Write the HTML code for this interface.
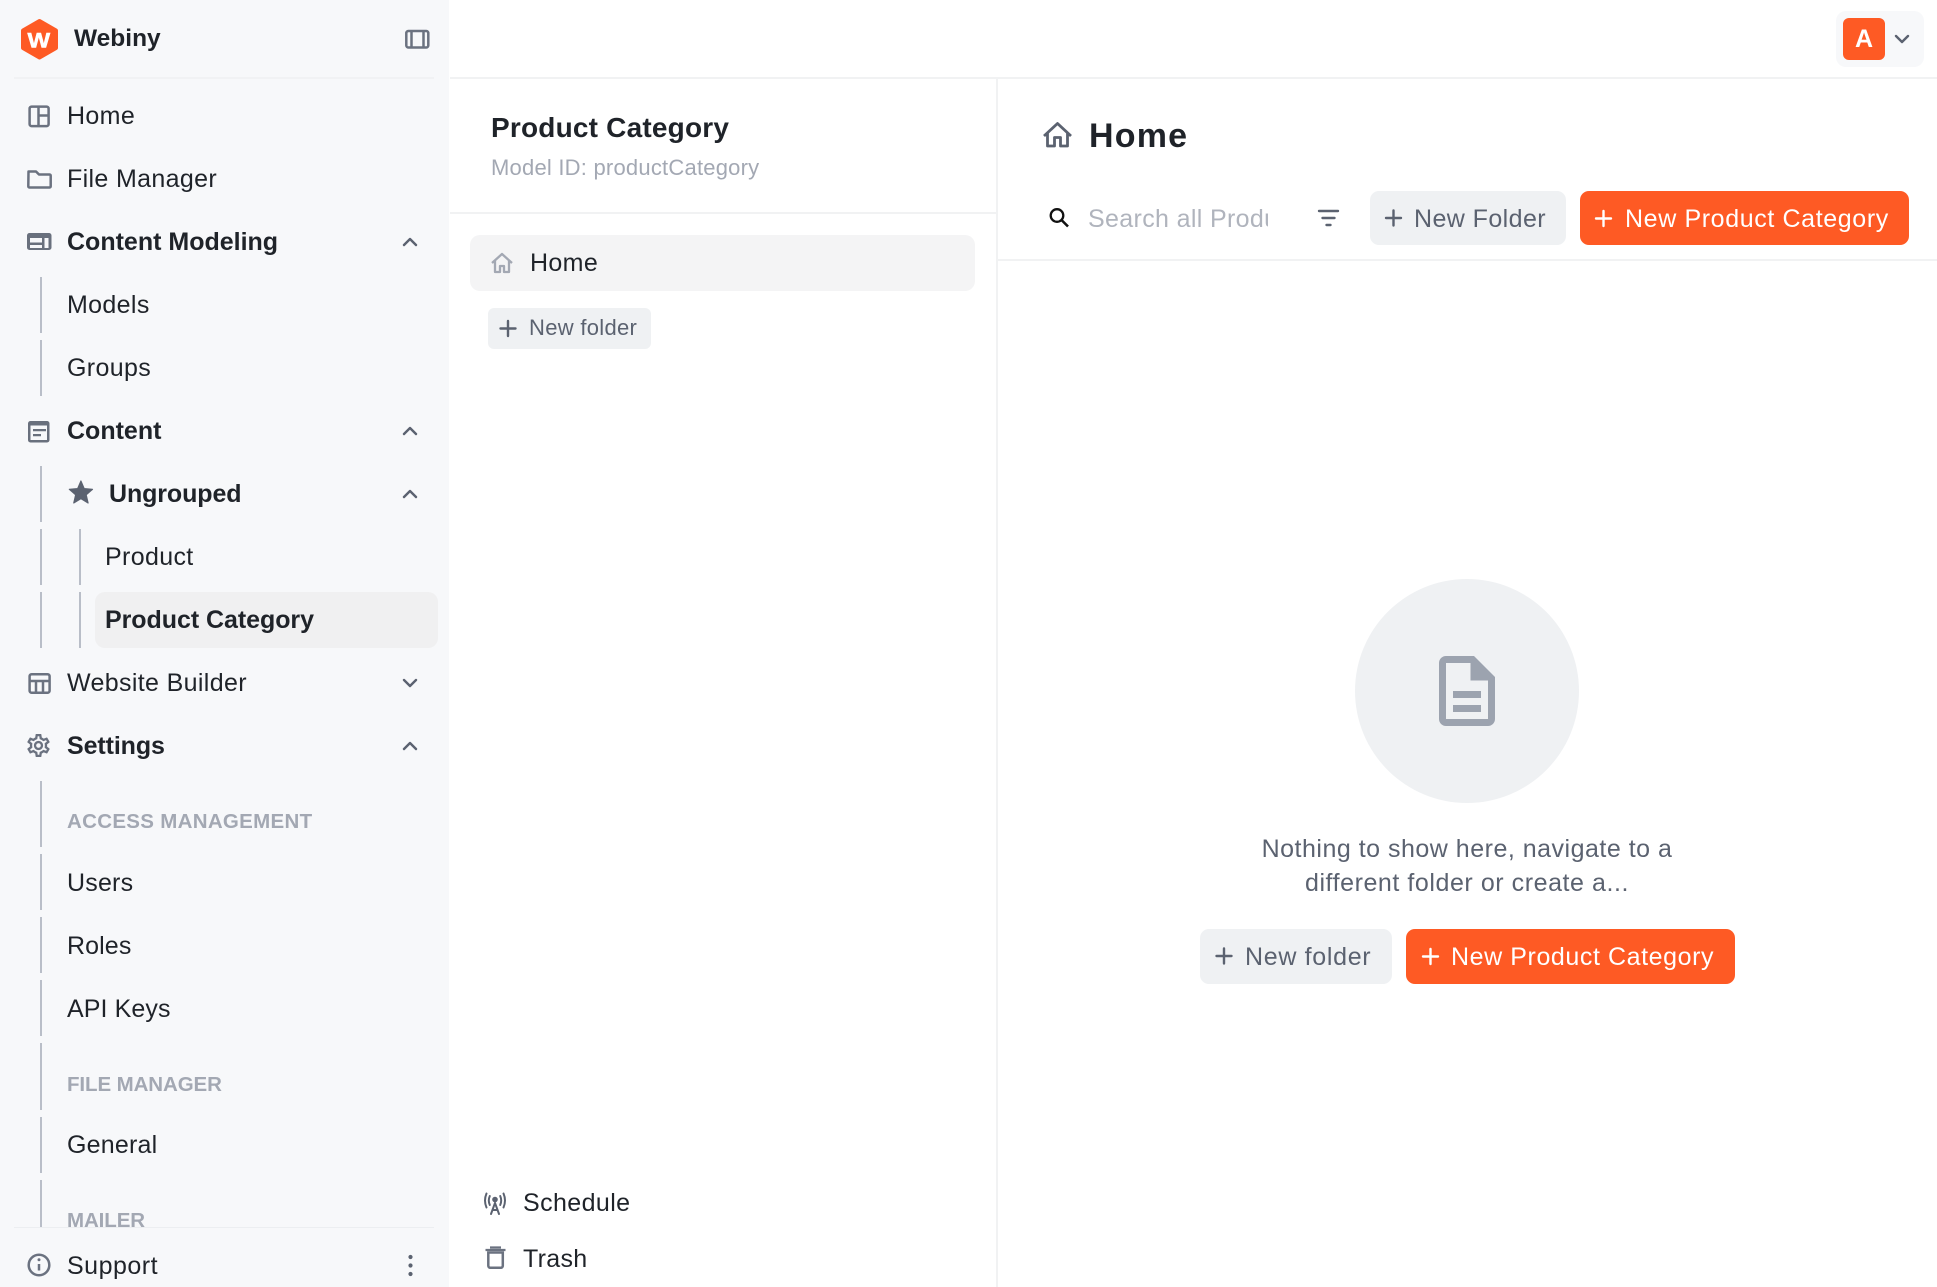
<!DOCTYPE html>
<html lang="en"><head><meta charset="utf-8"><title>Product Category</title>
<style>
html,body{margin:0;padding:0;width:1937px;height:1287px;overflow:hidden;background:#fff;font-family:"Liberation Sans",sans-serif}
.a{position:absolute}
.t{position:absolute;white-space:nowrap;line-height:40px;font-size:25px;letter-spacing:.35px;color:#1f2329;margin-top:1px}
.b{font-weight:700;letter-spacing:0}
.h{font-size:20.5px;font-weight:700;letter-spacing:.3px;color:#a3a8b3}
.v{position:absolute;width:2px;background:#b9bec8}
.g{color:#5b6270}
.w{color:#fff}
</style></head><body>
<div class="a" style="left:0;top:0;width:449px;height:1287px;background:#f7f8fa"></div>
<div class="a" style="left:14px;top:77px;width:420px;height:2px;background:#f1f2f4"></div>
<div class="a" style="left:450px;top:77px;width:1487px;height:2px;background:#f1f2f3"></div>
<div class="a" style="left:996px;top:79px;width:2px;height:1208px;background:#f1f2f3"></div>
<div class="a" style="left:450px;top:212px;width:546px;height:2px;background:#f1f2f3"></div>
<div class="a" style="left:998px;top:259px;width:939px;height:2px;background:#f1f2f3"></div>

<div class="t b" style="left:74px;top:18px;font-size:24.5px">Webiny</div>

<div class="a" style="left:95px;top:592px;width:343px;height:56px;background:#f0f0f1;border-radius:10px"></div>
<div class="a" style="left:0;top:0;width:449px;height:1227px;overflow:hidden">
<div class="v" style="left:40px;top:277px;height:56px"></div>
<div class="v" style="left:40px;top:340px;height:56px"></div>
<div class="v" style="left:40px;top:466px;height:56px"></div>
<div class="v" style="left:40px;top:529px;height:56px"></div>
<div class="v" style="left:40px;top:592px;height:56px"></div>
<div class="v" style="left:79px;top:529px;height:56px"></div>
<div class="v" style="left:79px;top:592px;height:56px"></div>
<div class="v" style="left:40px;top:781px;height:66px"></div>
<div class="v" style="left:40px;top:854px;height:56px"></div>
<div class="v" style="left:40px;top:917px;height:56px"></div>
<div class="v" style="left:40px;top:980px;height:56px"></div>
<div class="v" style="left:40px;top:1043px;height:67px"></div>
<div class="v" style="left:40px;top:1117px;height:56px"></div>
<div class="v" style="left:40px;top:1180px;height:60px"></div>
<div class="t" style="left:67px;top:95px">Home</div>
<div class="t" style="left:67px;top:158px">File Manager</div>
<div class="t b" style="left:67px;top:221px">Content Modeling</div>
<div class="t" style="left:67px;top:284px">Models</div>
<div class="t" style="left:67px;top:347px">Groups</div>
<div class="t b" style="left:67px;top:410px">Content</div>
<div class="t b" style="left:109px;top:473px;letter-spacing:-.1px">Ungrouped</div>
<div class="t" style="left:105px;top:536px">Product</div>
<div class="t b" style="left:105px;top:599px;letter-spacing:-.05px">Product Category</div>
<div class="t" style="left:67px;top:662px">Website Builder</div>
<div class="t b" style="left:67px;top:725px;letter-spacing:-.1px">Settings</div>
<div class="t h" style="left:67px;top:801px">ACCESS MANAGEMENT</div>
<div class="t" style="left:67px;top:862px;letter-spacing:.2px">Users</div>
<div class="t" style="left:67px;top:925px;letter-spacing:.1px">Roles</div>
<div class="t" style="left:67px;top:988px;letter-spacing:.1px">API Keys</div>
<div class="t h" style="left:67px;top:1064px;letter-spacing:-.1px">FILE MANAGER</div>
<div class="t" style="left:67px;top:1124px;letter-spacing:.2px">General</div>
<div class="t h" style="left:67px;top:1200px;letter-spacing:-.1px">MAILER</div>
</div>
<div class="a" style="left:14px;top:1227px;width:420px;height:1px;background:#eceef1"></div>
<div class="t" style="left:67px;top:1245px;letter-spacing:.5px">Support</div>

<div class="t b" style="left:491px;top:108px;font-size:28px;letter-spacing:.2px;margin-top:0">Product Category</div>
<div class="t" style="left:491px;top:147px;font-size:22px;letter-spacing:.22px;color:#a3a8b3">Model ID: productCategory</div>
<div class="a" style="left:470px;top:235px;width:505px;height:56px;background:#f4f4f5;border-radius:10px"></div>
<div class="t" style="left:530px;top:242px">Home</div>
<div class="a" style="left:488px;top:308px;width:163px;height:41px;background:#eff1f3;border-radius:6px"></div>
<div class="t g" style="left:529px;top:307px;font-size:22px;letter-spacing:.3px">New folder</div>
<div class="t" style="left:523px;top:1182px;letter-spacing:.4px">Schedule</div>
<div class="t" style="left:523px;top:1238px;letter-spacing:.3px">Trash</div>

<div class="a" style="left:1836px;top:11px;width:88px;height:56px;background:#f7f8fa;border-radius:10px"></div>
<div class="a" style="left:1843px;top:18px;width:42px;height:42px;background:#fe5a24;border-radius:6px"></div>
<div class="t b w" style="left:1843px;top:18px;width:42px;text-align:center">A</div>

<div class="t b" style="left:1089px;top:116px;font-size:34px;letter-spacing:1.2px;margin-top:0">Home</div>
<div class="t" style="left:1088px;top:198px;width:180px;overflow:hidden;color:#b0b4bd;letter-spacing:.35px">Search all Products</div>
<div class="a" style="left:1370px;top:191px;width:196px;height:54px;background:#eff1f3;border-radius:9px"></div>
<div class="t g" style="left:1414px;top:198px;letter-spacing:.42px">New Folder</div>
<div class="a" style="left:1580px;top:191px;width:329px;height:54px;background:#fe5a24;border-radius:9px"></div>
<div class="t w" style="left:1625px;top:198px;letter-spacing:.62px">New Product Category</div>

<div class="a" style="left:1355px;top:579px;width:224px;height:224px;background:#eff1f3;border-radius:50%"></div>
<div class="t g" style="left:1067px;width:800px;text-align:center;top:828px;letter-spacing:.5px">Nothing to show here, navigate to a</div>
<div class="t g" style="left:1067px;width:800px;text-align:center;top:862px;letter-spacing:.56px">different folder or create a...</div>
<div class="a" style="left:1200px;top:929px;width:192px;height:55px;background:#eff1f3;border-radius:9px"></div>
<div class="t g" style="left:1245px;top:936px;letter-spacing:.68px">New folder</div>
<div class="a" style="left:1406px;top:929px;width:329px;height:55px;background:#fe5a24;border-radius:9px"></div>
<div class="t w" style="left:1451px;top:936px;letter-spacing:.58px">New Product Category</div>

<svg class="a" style="left:0;top:0" width="1937" height="1287" viewBox="0 0 1937 1287" fill="none">
<polygon points="39.5,21 56,30.5 56,48 39.500,57.500 23,48 23,30.500" fill="#fe5a24" stroke="#fe5a24" stroke-width="4" stroke-linejoin="round"/>
<text x="0" y="0" transform="translate(27.5 47.500) scale(1.2 1.05)" font-family="Liberation Sans" font-weight="700" font-size="20" fill="#fff" stroke="#fff" stroke-width=".5">W</text>
<g stroke="#6b7280" stroke-width="2.5">
<rect x="406.3" y="31" width="22" height="16.5" rx="2"/><path d="M411.5 31v16.500M423.500 31v16.500"/>
<rect x="29.600" y="106.600" width="19" height="19.500" rx="2"/><path d="M38.500 106.600v19.500M38.500 115.500h10"/>
<path d="M28.500 171.500h7.500l3 3h10.500a1.300 1.300 0 0 1 1.200 1.300v10.500a1.300 1.300 0 0 1-1.200 1.200H29.500a1.300 1.300 0 0 1-1.200-1.200z" stroke-linejoin="round"/>
<rect x="29.600" y="674.200" width="20" height="18.500" rx="2"/><path d="M29.600 681h20M36 681v11.700M43 681v11.700"/>
<circle cx="39" cy="1265" r="10.300"/>
<path d="M39 1264v6.500" />
</g>
<rect x="27" y="233" width="24.500" height="17" rx="2.500" fill="#69707d"/>
<path d="M30 238h12v4.500H30zM30 245h12v3H30zM44.500 238h4v10h-4z" fill="#f7f8fa"/>
<rect x="28" y="421" width="21.500" height="21.500" rx="2.500" fill="#69707d"/>
<path d="M30.500 425.500h16.500v14.500H30.500z" fill="#f7f8fa"/>
<path d="M33 429h13v2.300H33zM33 434h8v2.300H33z" fill="#69707d"/>
<path d="M488.300 1252.500h14.500v13.300a2 2 0 0 1-2 2h-10.500a2 2 0 0 1-2-2z" stroke="#6b7280" stroke-width="2.500"/><path d="M485.500 1250h20M490 1247.500h11" stroke="#6b7280" stroke-width="2.300"/>
<circle cx="39" cy="1259.800" r="1.500" fill="#6b7280"/>
<path fill="#6b7280" transform="translate(24.700 731.700) scale(1.150)" d="M19.43 12.98c.04-.32.07-.64.07-.98 0-.34-.03-.66-.07-.98l2.11-1.65c.19-.15.24-.42.12-.64l-2-3.46c-.09-.16-.26-.25-.44-.25-.06 0-.12.01-.17.03l-2.49 1c-.52-.4-1.08-.73-1.69-.98l-.38-2.65C14.46 2.18 14.25 2 14 2h-4c-.25 0-.46.18-.49.42l-.38 2.65c-.61.25-1.17.59-1.69.98l-2.49-1c-.06-.02-.12-.03-.18-.03-.17 0-.34.09-.43.25l-2 3.46c-.13.22-.07.49.12.64l2.11 1.65c-.04.32-.07.65-.07.98 0 .33.03.66.07.98l-2.11 1.65c-.19.15-.24.42-.12.64l2 3.46c.09.16.26.25.44.25.06 0 .12-.01.17-.03l2.49-1c.52.4 1.08.73 1.69.98l.38 2.65c.03.24.24.42.49.42h4c.25 0 .46-.18.49-.42l.38-2.65c.61-.25 1.17-.59 1.69-.98l2.49 1c.06.02.12.03.18.03.17 0 .34-.09.43-.25l2-3.46c.12-.22.07-.49-.12-.64l-2.11-1.65zm-1.98-1.71c.04.31.05.52.05.73 0 .21-.02.43-.05.73l-.14 1.13.89.7 1.08.84-.7 1.21-1.27-.51-1.04-.42-.9.68c-.43.32-.84.56-1.25.73l-1.06.43-.16 1.13-.2 1.35h-1.4l-.19-1.35-.16-1.13-1.06-.43c-.43-.18-.83-.41-1.23-.71l-.91-.7-1.06.43-1.27.51-.7-1.21 1.08-.84.89-.7-.14-1.13c-.03-.31-.05-.54-.05-.74s.02-.43.05-.73l.14-1.13-.89-.7-1.08-.84.7-1.21 1.27.51 1.04.42.9-.68c.43-.32.84-.56 1.25-.73l1.06-.43.16-1.13.2-1.35h1.39l.19 1.35.16 1.13 1.06.43c.43.18.83.41 1.23.71l.91.7 1.06-.43 1.27-.51.7 1.21-1.07.85-.89.7.14 1.13zM12 8c-2.21 0-4 1.790-4 4s1.790 4 4 4 4-1.790 4-4-1.790-4-4-4zm0 6c-1.100 0-2-.9-2-2s.9-2 2-2 2 .9 2 2-.9 2-2 2z"/>
<path fill="#5b6270" transform="translate(67 478.600) scale(1.160)" d="M12 17.270L18.180 21l-1.640-7.030L22 9.240l-7.190-.61L12 2 9.190 8.630 2 9.240l5.460 4.730L5.820 21z" stroke="#5b6270" stroke-width="1" stroke-linejoin="round"/>
<g stroke="#5b6270" stroke-width="2.400" stroke-linecap="round" stroke-linejoin="round">
<path d="M404 245l6-6 6 6M404 434l6-6 6 6M404 497l6-6 6 6M404 749l6-6 6 6M404 680l6 6 6-6M1896 36l6 6 6-6"/>
<path d="M1319 211h19M1322.500 218h12M1326.500 225h4"/>
<path d="M1386 218h15M1393.500 210.500v15M1216.500 956h15M1224 948.500v15M500.500 328.500h15M508 321v15"/>
</g>
<g stroke="#fff" stroke-width="2.400" stroke-linecap="round"><path d="M1596 218.500h15M1603.500 211v15M1423 956.500h15M1430.500 949v15"/></g>
<g fill="#5b6270"><circle cx="410.500" cy="1257" r="2.100"/><circle cx="410.500" cy="1265.500" r="2.100"/><circle cx="410.500" cy="1274" r="2.100"/></g>
<path d="M492 263l10-9 10 9M495 260.500v11.500h5v-6h4v6h5v-11.500" stroke="#a3a8b3" stroke-width="2.300" stroke-linejoin="round"/>
<path d="M1044 136l13.500-12.500 13.500 12.500M1047.500 132.500v13.500h7v-8.500h6v8.500h7v-13.500" stroke="#5b6270" stroke-width="2.800" stroke-linejoin="round"/>
<circle cx="1057" cy="215.500" r="6.300" stroke="#111" stroke-width="2.300"/><path d="M1061.500 220l6.500 6.500" stroke="#111" stroke-width="2.600"/>
<path fill="#9ca3af" transform="translate(1425 649) scale(3.500)" d="M8 16h8v2H8zm0-4h8v2H8zm6-10H6c-1.100 0-2 .9-2 2v16c0 1.100.89 2 1.990 2H18c1.100 0 2-.9 2-2V8l-6-6zm4 18H6V4h7v5h5v11z"/>
<g stroke="#5b6270" stroke-width="2" stroke-linecap="round" fill="none">
<path d="M486.500 1193.500q-3 7 0 14M489.800 1196q-2 4.500 0 9M503.500 1193.500q3 7 0 14M500.200 1196q2 4.500 0 9"/>
<path d="M495 1203l-4 11M495 1203l4 11M492.500 1210h5"/>
</g>
<circle cx="495" cy="1199.500" r="2.800" fill="#5b6270"/>
</svg>
</body></html>
